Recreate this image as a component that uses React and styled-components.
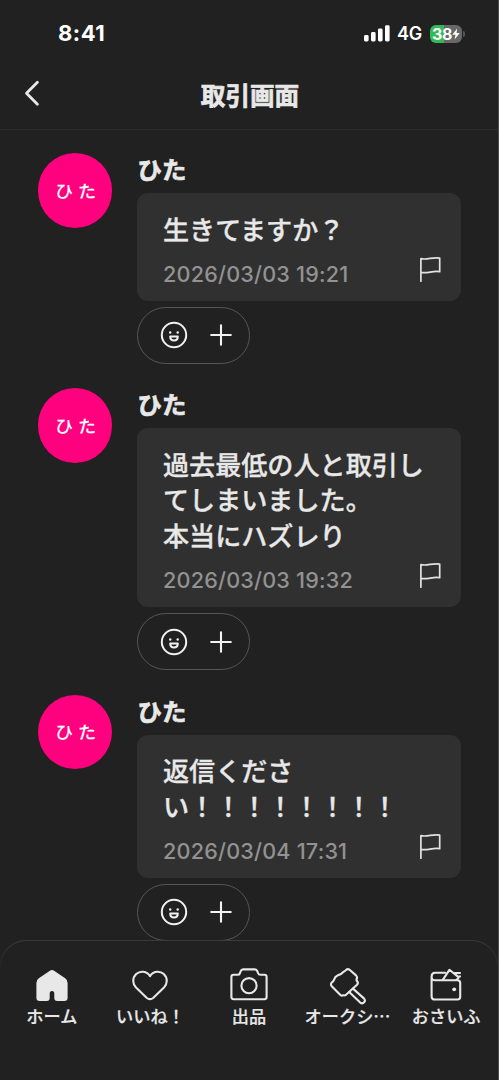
import React from "react";
import styled, { createGlobalStyle } from "styled-components";

const messages = [
  { lines: ["生きてますか？"], date: "2026/03/03 19:21" },
  {
    lines: ["過去最低の人と取引し", "てしまいました。", "本当にハズレり"],
    date: "2026/03/03 19:32",
  },
  { lines: ["返信くださ", "い！！！！！！！！"], date: "2026/03/04 17:31" },
];

const SignalIcon = () => (
  <svg width="26" height="17" viewBox="0 0 26 17" fill="#fff">
    <rect x="0" y="10" width="4.6" height="6.4" rx="1.4" />
    <rect x="7" y="7" width="4.6" height="9.4" rx="1.4" />
    <rect x="14" y="3.6" width="4.6" height="12.8" rx="1.4" />
    <rect x="21" y="0.3" width="4.6" height="16.1" rx="1.4" />
  </svg>
);

const BoltIcon = () => (
  <svg width="8" height="12" viewBox="0 0 8 12" fill="#fff">
    <path d="M5.2 0.4 0.3 6.8H3.5L2.6 11.6 7.7 5H4.5Z" />
  </svg>
);

const BackIcon = () => (
  <svg width="16" height="27" viewBox="0 0 16 27" fill="none" stroke="#e8e8e8" strokeWidth="2.8" strokeLinecap="round" strokeLinejoin="round">
    <path d="M13.4 2.2 2.5 13.3 13.4 24.2" />
  </svg>
);

const FlagIcon = () => (
  <svg width="22" height="26" viewBox="0 0 22 26" fill="none" stroke="#e2e2e2" strokeWidth="1.7" strokeLinecap="round" strokeLinejoin="round">
    <path d="M1.9 24.2V1.7C8.4 3.2 13.9-.3 20.7 1.2V14.7C13.9 13.3 8.4 16.9 1.9 15.4" />
  </svg>
);

const SmileIcon = () => (
  <svg width="28" height="28" viewBox="0 0 28 28" fill="none" stroke="#f2f2f2" strokeWidth="2">
    <circle cx="14" cy="14" r="12.2" />
    <circle cx="10.2" cy="11.5" r="1.2" fill="#f2f2f2" stroke="none" />
    <circle cx="17.7" cy="11.5" r="1.2" fill="#f2f2f2" stroke="none" />
    <path d="M10.2 15.6H17.8C17.8 18.2 16.2 19.6 14 19.6S10.2 18.2 10.2 15.6Z" strokeWidth="2" strokeLinejoin="round" />
  </svg>
);

const PlusIcon = () => (
  <svg width="22" height="22" viewBox="0 0 22 22" stroke="#f2f2f2" strokeWidth="2.1" strokeLinecap="round">
    <path d="M11 1.2V20.8M1.2 11H20.8" />
  </svg>
);

const HomeIcon = () => (
  <svg width="38" height="38" viewBox="0 0 38 38" fill="#e8e8e8">
    <path d="M16.9 3.7Q19 2.3 21.1 3.7L32.2 11.3Q34.6 13 34.6 15.9V30.7Q34.6 34 31.3 34H24.2Q21.3 34 21.3 31.1V26.7Q21.3 24 19 24T16.7 26.7V31.1Q16.7 34 13.8 34H6.7Q3.4 34 3.4 30.7V15.9Q3.4 13 5.8 11.3Z" />
  </svg>
);

const HeartIcon = () => (
  <svg width="38" height="38" viewBox="0 0 38 38" {...line}>
    <path d="M19 9.1C15.8 3.6 8.8 3.7 5.2 7C1 11 1.6 17 5 20.5L15.6 30.7Q19 33.7 22.4 30.7L33 20.5C36.4 17 37 11 32.8 7C29.2 3.7 22.2 3.6 19 9.1Z" />
  </svg>
);

const CameraIcon = () => (
  <svg width="38" height="38" viewBox="0 0 38 38" {...line}>
    <path d="M3.5 7.8H7.6Q9.3 7.8 9.8 6.5L10.6 4.4Q11.3 2.4 13.2 2.4H24.8Q26.7 2.4 27.4 4.4L28.2 6.5Q28.7 7.8 30.4 7.8H34.5Q36.6 7.8 36.6 9.9V30.1Q36.6 32.2 34.5 32.2H3.5Q1.4 32.2 1.4 30.1V9.9Q1.4 7.8 3.5 7.8Z" />
    <circle cx="19" cy="18.7" r="7.6" />
  </svg>
);

const HammerIcon = () => (
  <svg width="38" height="38" viewBox="0 0 38 38" {...line}>
    <path d="M14.6 4.8Q16.1 4.3 17 3Q18.8 1.4 20.9 3L27 8.4Q28.8 10.3 27.5 12.4Q27.2 13.4 28.3 14.4Q29.6 16 28 17.8L17.3 27.6Q15.6 29 14.2 28.2Q12.9 29.2 11.4 28L3 19.6Q1.2 17.7 2.6 15.6Q4.6 14.3 5.2 12.4Q5.9 9.4 8.6 8.4Q11.6 8.2 14.6 4.8Z" />
    <path d="M24 21.6 34.9 31.4Q36.8 33.4 35.1 35.3T31.2 35.6L20.2 25.1" />
  </svg>
);

const WalletIcon = () => (
  <svg width="38" height="38" viewBox="0 0 38 38" {...line}>
    <path d="M18.2 5.8H8Q4.6 5.8 4.6 9.4V29.4Q4.6 32.5 7.7 32.5H30.5Q33.2 32.5 33.2 29.8V16Q33.2 13.3 30.5 13.3H8Q4.6 13.3 4.6 9.4" />
    <path d="M15.8 12.8 22.4 2.8 31.8 10.4 29.6 13M27.8 6.1 33 6M31.2 9.8 33 9.4" />
    <circle cx="27.2" cy="22.3" r="1.9" fill="#e8e8e8" stroke="none" />
  </svg>
);

const line = {
  fill: "none",
  stroke: "#e8e8e8",
  strokeWidth: 2.1,
  strokeLinecap: "round",
  strokeLinejoin: "round",
};

const tabs = [
  { label: "ホーム", icon: <HomeIcon /> },
  { label: "いいね！", icon: <HeartIcon /> },
  { label: "出品", icon: <CameraIcon /> },
  { label: "オークシ…", icon: <HammerIcon /> },
  { label: "おさいふ", icon: <WalletIcon /> },
];

export default function App() {
  return (
    <Screen>
      <GlobalStyle />
      <StatusBar>
        <Clock>8:41</Clock>
        <StatusRight>
          <SignalIcon />
          <Network>4G</Network>
          <BatteryWrapper>
            <Battery $level={43}>
              38
              <BoltIcon />
            </Battery>
            <BatteryTip />
          </BatteryWrapper>
        </StatusRight>
      </StatusBar>
      <Header>
        <BackButton aria-label="戻る">
          <BackIcon />
        </BackButton>
        <Title>取引画面</Title>
      </Header>
      <MessageList>
        {messages.map((message) => (
          <Message key={message.date}>
            <Avatar>
              <AvatarChar $tilt={6}>ひ</AvatarChar>
              <AvatarChar $tilt={-2}>た</AvatarChar>
            </Avatar>
            <Body>
              <Name>ひた</Name>
              <Bubble>
                {message.lines.map((text) => (
                  <Text key={text}>{text}</Text>
                ))}
                <BubbleFooter>
                  <DateText>{message.date}</DateText>
                  <FlagIcon />
                </BubbleFooter>
              </Bubble>
              <Reaction>
                <SmileIcon />
                <PlusIcon />
              </Reaction>
            </Body>
          </Message>
        ))}
      </MessageList>
      <TabBar>
        {tabs.map((tab) => (
          <Tab key={tab.label}>
            {tab.icon}
            <TabLabel>{tab.label}</TabLabel>
          </Tab>
        ))}
      </TabBar>
    </Screen>
  );
}

const GlobalStyle = createGlobalStyle`
  * {
    box-sizing: border-box;
  }
  body {
    margin: 0;
    background: #212121;
    font-family: "Inter", "Noto Sans CJK JP", sans-serif;
  }
  svg {
    display: block;
    flex-shrink: 0;
  }
`;

const Screen = styled.div`
  display: flex;
  flex-direction: column;
  width: 499px;
  height: 1080px;
  overflow: hidden;
  background: #212121;
  border-right: 1px solid #4c4c4c;
  color: #e8e8e8;
`;

const StatusBar = styled.div`
  display: flex;
  justify-content: space-between;
  align-items: center;
  height: 66px;
  padding: 0 33px 0 58px;
  color: #fff;
`;

const Clock = styled.span`
  font-size: 22px;
  font-weight: 700;
  letter-spacing: 0.5px;
`;

const StatusRight = styled.div`
  display: flex;
  align-items: center;
  padding-top: 1px;
`;

const Network = styled.span`
  margin: 0 8px 0 7px;
  font-size: 18px;
  font-weight: 600;
  letter-spacing: -0.2px;
`;

const BatteryWrapper = styled.div`
  display: flex;
  align-items: center;
  gap: 1px;
`;

const Battery = styled.div`
  display: flex;
  align-items: center;
  justify-content: center;
  width: 32px;
  height: 18px;
  border-radius: 6px;
  background: linear-gradient(
    to right,
    #34b957 ${(props) => props.$level}%,
    #686868 ${(props) => props.$level}%
  );
  font-size: 16px;
  font-weight: 700;
  letter-spacing: -0.4px;
`;

const BatteryTip = styled.div`
  width: 2px;
  height: 6px;
  border-radius: 0 2px 2px 0;
  background: #555;
`;

const Header = styled.div`
  display: grid;
  grid-template-columns: 60px 1fr 60px;
  align-items: center;
  height: 64px;
  padding-bottom: 4px;
  border-bottom: 1px solid #2c2c2c;
`;

const BackButton = styled.button`
  padding: 0 0 5px 24px;
  border: 0;
  background: none;
`;

const Title = styled.h1`
  margin: 0 0 0 2px;
  text-align: center;
  font-size: 24.6px;
  font-weight: 700;
  line-height: 36px;
  -webkit-text-stroke: 0.7px currentColor;
`;

const MessageList = styled.div`
  display: flex;
  flex-direction: column;
  flex: 1;
  gap: 24.4px;
  min-height: 0;
  overflow: hidden;
  padding: 23px 37px 0 37.5px;
`;

const Message = styled.div`
  display: flex;
  flex-shrink: 0;
  gap: 24.5px;
`;

const Avatar = styled.div`
  display: flex;
  align-items: center;
  justify-content: center;
  gap: 5px;
  flex-shrink: 0;
  width: 74.5px;
  height: 74.5px;
  padding: 3px 0 0 1px;
  border-radius: 50%;
  background: #ff007f;
`;

const AvatarChar = styled.span`
  color: #fff;
  font-size: 18px;
  font-weight: 500;
  line-height: 20px;
  transform: rotate(${(props) => props.$tilt}deg);
`;

const Body = styled.div`
  display: flex;
  flex-direction: column;
  align-items: flex-start;
  flex: 1;
`;

const Name = styled.div`
  height: 40px;
  padding-left: 1px;
  font-size: 24.4px;
  font-weight: 700;
  line-height: 34px;
  -webkit-text-stroke: 0.7px currentColor;
`;

const Bubble = styled.div`
  width: 100%;
  padding: 19.5px 20px 15px 26.5px;
  border-radius: 11px;
  background: #303030;
`;

const Text = styled.div`
  height: 35.7px;
  font-size: 26.1px;
  font-weight: 500;
  line-height: 35.7px;
  white-space: nowrap;
  -webkit-text-stroke: 0.3px currentColor;
`;

const BubbleFooter = styled.div`
  display: flex;
  justify-content: space-between;
  align-items: flex-end;
  height: 37.5px;
  padding-bottom: 3px;
`;

const DateText = styled.span`
  color: #929292;
  font-size: 21.6px;
  font-weight: 500;
  line-height: 17px;
  letter-spacing: 0.2px;
`;

const Reaction = styled.div`
  display: flex;
  align-items: center;
  justify-content: center;
  gap: 22px;
  width: 113px;
  height: 57px;
  margin-top: 6px;
  padding-left: 6px;
  border: 1.5px solid #555;
  border-radius: 29px;
`;

const TabBar = styled.nav`
  display: grid;
  grid-template-columns: repeat(5, 98.6px);
  justify-content: center;
  flex-shrink: 0;
  height: 140px;
  padding: 26px 0 0;
  border: 1px solid transparent;
  border-bottom: 0;
  border-radius: 26px 26px 0 0;
  background:
    linear-gradient(#212121, #212121) padding-box,
    linear-gradient(to bottom, #3a3a3a 0, #212121 30px) border-box;
`;

const Tab = styled.div`
  display: flex;
  flex-direction: column;
  align-items: center;
`;

const TabLabel = styled.span`
  font-family: "Noto Sans CJK JP", sans-serif;
  font-size: 17.2px;
  font-weight: 500;
  line-height: 22px;
  white-space: nowrap;
  -webkit-text-stroke: 0.2px currentColor;
`;
